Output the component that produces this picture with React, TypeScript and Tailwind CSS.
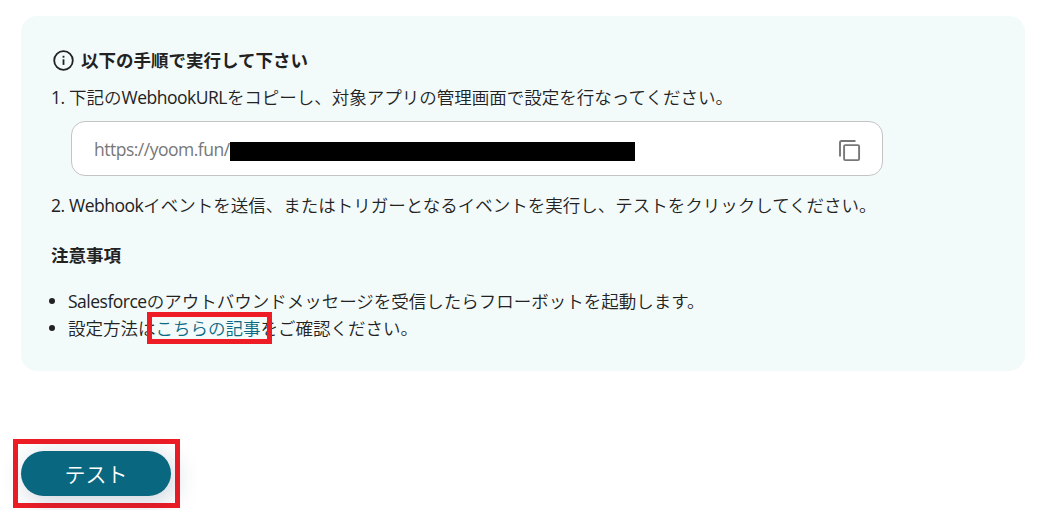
import type { ReactNode } from "react";

function InfoIcon() {
    return (
        <svg width="21" height="21" viewBox="0 0 21 21" fill="none" stroke="#222" strokeWidth="1.8">
            <circle cx="10.5" cy="10.5" r="9.3" />
            <path d="M10.5 9.3v5.6" />
            <path d="M10.5 5.8v1.9" />
        </svg>
    );
}

function CopyIcon() {
    return (
        <svg width="22" height="22" viewBox="0 0 22 22" fill="none" stroke="#777" strokeWidth="1.9">
            <rect x="5.1" y="5.1" width="15" height="15" rx="1.2" />
            <path d="M16.5 1H2.4Q1 1 1 2.4V16.6" />
        </svg>
    );
}

function Latin({ children }: { children: ReactNode }) {
    return <span className="font-['Open_Sans'] text-[17.5px] leading-none font-normal tracking-[-0.5px]">{children}</span>;
}

export default function App() {
    return (
        <main className="h-[510px] overflow-hidden bg-white font-['Noto_Sans_CJK_JP',sans-serif] text-[17.5px] leading-[26px] font-[350] whitespace-nowrap text-[#222]">
            <div className="pt-4 pl-[21px]">
                <section className="h-[355px] w-[1004px] rounded-2xl bg-[#f2fafa] pt-[31px] pl-[30px]">
                    <h2 className="flex items-center gap-[7px] pl-[2px] font-bold">
                        <InfoIcon />
                        以下の手順で実行して下さい
                    </h2>
                    <p className="mt-[11px] flex h-[26px]">
                        <span className="w-[18px]"><Latin>1.</Latin></span>
                        <span>下記の<Latin>WebhookURL</Latin>をコピーし、対象アプリの管理画面で設定を行なってください。</span>
                    </p>
                    <div className="mt-[11px] ml-5 flex h-[55px] w-[812px] items-center rounded-[14px] border border-[#c4c4c4] bg-white pr-[21px] pl-[22px] text-[#777]">
                        <span className="w-[136px]"><Latin>https://yoom.fun/</Latin></span>
                        <span className="mt-[5px] h-[19px] w-[405px] bg-black" />
                        <span className="mt-[4px] ml-auto"><CopyIcon /></span>
                    </div>
                    <p className="mt-4 flex h-[26px]">
                        <span className="w-[18px]"><Latin>2.</Latin></span>
                        <span><Latin>Webhook</Latin>イベントを送信、またはトリガーとなるイベントを実行し、テストをクリックしてください。</span>
                    </p>
                    <h3 className="mt-6 font-bold">注意事項</h3>
                    <ul className="mt-[19px] -ml-px leading-[27px]">
                        <li className="flex h-[27px] items-center">
                            <span className="mr-[13px] ml-[-1px] size-[6px] rounded-full bg-[#222]" />
                            <span><Latin>Salesforce</Latin>のアウトバウンドメッセージを受信したらフローボットを起動します。</span>
                        </li>
                        <li className="flex h-[27px] items-center">
                            <span className="mr-[13px] ml-[-1px] size-[6px] rounded-full bg-[#222]" />
                            <span>
                                設定方法は
                                <span className="relative text-[#0b6b84]">
                                    こちらの記事
                                    <span className="absolute top-[-3px] left-[-9px] h-8 w-[125px] border-[5px] border-[#ee1c25]" />
                                </span>
                                をご確認ください。
                            </span>
                        </li>
                    </ul>
                </section>
            </div>
            <div className="mt-[68px] ml-[13px] h-[69px] w-[167px] border-[5px] border-[#ee1c25] pt-[7px] pl-[3px]">
                <button className="h-[45px] w-[150px] rounded-full bg-[#0a6780] pb-[2px] text-[21px] font-[350] text-white shadow-[4px_5px_26px_rgba(20,50,90,0.22)]">
                    テスト
                </button>
            </div>
        </main>
    );
}
